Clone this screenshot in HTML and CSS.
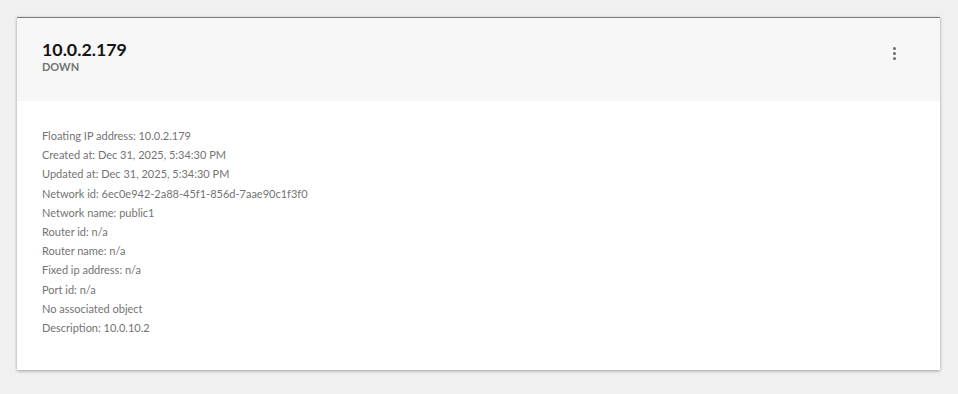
FILE: index.html
```html
<!DOCTYPE html>
<html>
<head>
<meta charset="utf-8">
<link rel="stylesheet" href="styles.css">
</head>
<body>
<div class="card">
  <div class="card-header">
    <div class="titles">
      <div class="title">10.0.2.179</div>
      <div class="status">DOWN</div>
    </div>
    <div class="kebab"><span></span><span></span><span></span></div>
  </div>
  <div class="card-body">
    <div class="row">Floating IP address: 10.0.2.179</div>
    <div class="row">Created at: Dec 31, 2025, 5:34:30 PM</div>
    <div class="row">Updated at: Dec 31, 2025, 5:34:30 PM</div>
    <div class="row">Network id: 6ec0e942-2a88-45f1-856d-7aae90c1f3f0</div>
    <div class="row">Network name: public1</div>
    <div class="row">Router id: n/a</div>
    <div class="row">Router name: n/a</div>
    <div class="row">Fixed ip address: n/a</div>
    <div class="row">Port id: n/a</div>
    <div class="row">No associated object</div>
    <div class="row">Description: 10.0.10.2</div>
  </div>
</div>
</body>
</html>
```
FILE: styles.css
```css
html, body {
  margin: 0;
  background: #f0f0f0;
}
body {
  padding: 17px;
  font-family: Lato, "Liberation Sans", sans-serif;
}
.card {
  width: 923px;
  background: #fff;
  border-top: 1px solid #7a7a7a;
  box-shadow: 0 1px 3px rgba(0,0,0,0.35);
}
.card-header {
  background: #f7f7f7;
  height: 83px;
  padding: 21px 44px 0 25px;
  box-sizing: border-box;
  display: flex;
  justify-content: space-between;
  align-items: flex-start;
}
.title {
  font-size: 17.8px;
  font-weight: 700;
  color: #151515;
  line-height: 20px;
}
.status {
  font-size: 11px;
  font-weight: 700;
  color: #737373;
  margin-top: 1px;
  line-height: 13px;
}
.kebab {
  display: flex;
  flex-direction: column;
  gap: 2px;
  margin-top: 8px;
}
.kebab span {
  width: 3px;
  height: 3px;
  border-radius: 50%;
  background: #6a6a6a;
}
.card-body {
  padding: 25px 25px 33px;
}
.row {
  font-size: 11px;
  line-height: 19.2px;
  color: #737373;
}
```
